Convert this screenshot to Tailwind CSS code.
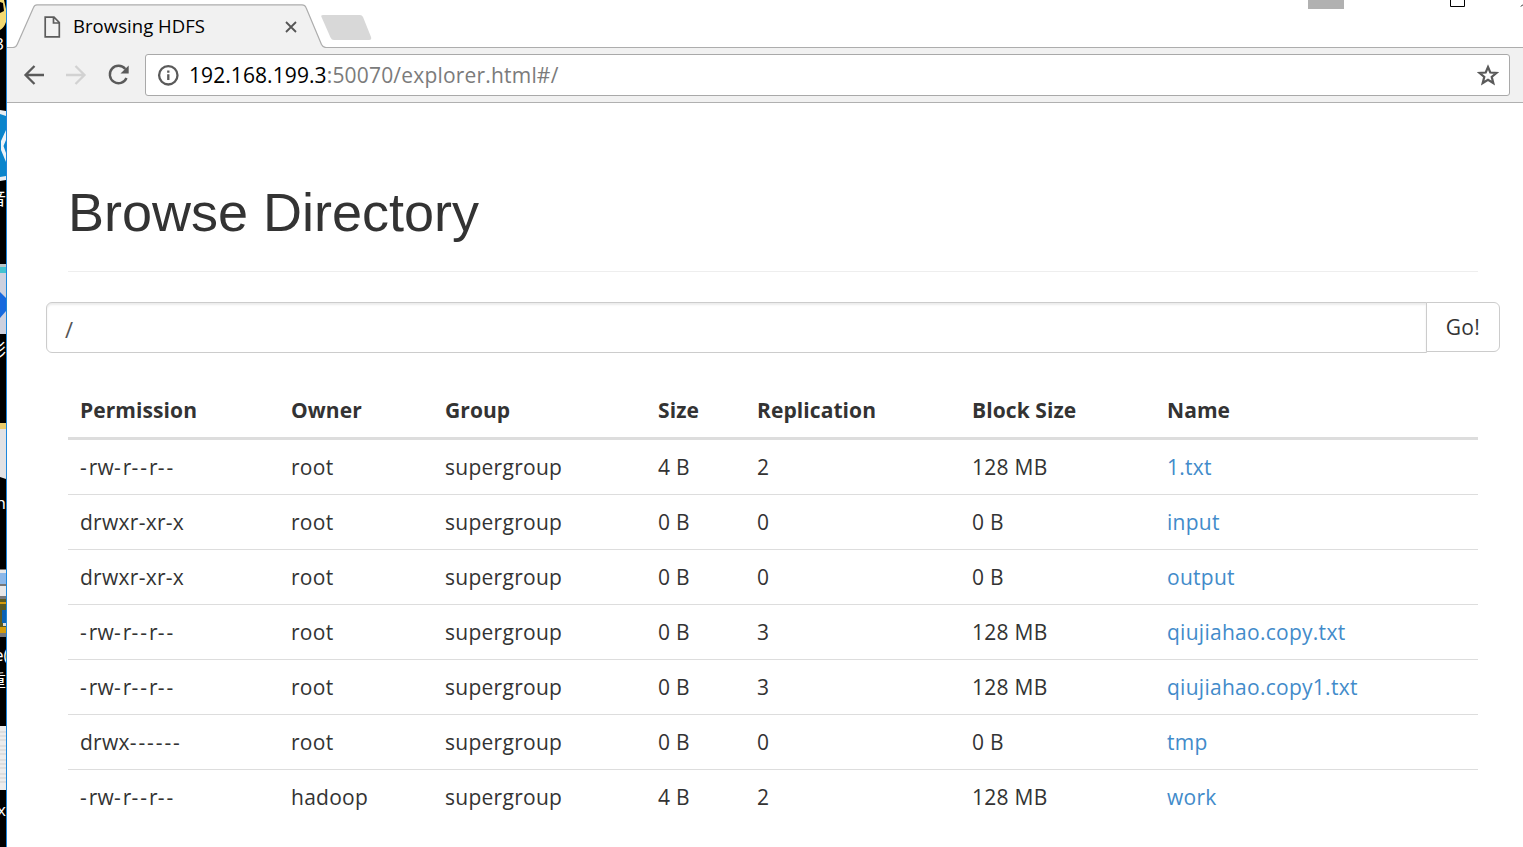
<!DOCTYPE html>
<html lang="en">
<head>
<meta charset="utf-8">
<title>Browsing HDFS</title>
<script src="https://cdn.jsdelivr.net/npm/@tailwindcss/browser@4"></script>
</head>
<body class="flex h-[847px] w-[1523px] overflow-hidden bg-white font-['Open_Sans','Noto_Sans_CJK_SC',sans-serif] text-[21px] text-[#333]">

<!-- Desktop sliver behind the window -->
<aside class="flex h-[847px] w-[7px] shrink-0 flex-col overflow-hidden border-r border-[#1c86dc] bg-black text-[19px] leading-6 text-white">
  <svg class="h-[34px] w-[6px] shrink-0" viewBox="0 0 6 34"><path d="M0 0H4L6 9V22Q4 28 0 30V13L4 11L3 3L0 2Z" fill="#f3da72"/></svg>
  <div class="flex h-[76px] w-[6px] shrink-0 justify-end overflow-hidden pr-[2px] text-[17px] leading-5">3</div>
  <svg class="h-[71px] w-[6px] shrink-0" viewBox="0 0 6 71"><path d="M0 0L6 1V70L0 71Z" fill="#e8edf2"/><path d="M0 4L6 6V66L0 67Z" fill="#0a84cb"/><path d="M6 20L1 31V40L6 52V43L3.500 36L6 30Z" fill="#eef3f8"/></svg>
  <div class="flex h-[83px] w-[6px] shrink-0 justify-end overflow-hidden pt-[6px] text-[17px]">音</div>
  <svg class="h-[70px] w-[6px] shrink-0" viewBox="0 0 6 70" preserveAspectRatio="none"><path d="M0 0H6V70H0Z" fill="#cdd1df"/><path d="M0 0H6V3H0Z" fill="#b9c5c8"/><path d="M0 3H6V9H0Z" fill="#45c3d0"/><path d="M0 28L6 34V47L0 54Z" fill="#1769dd"/></svg>
  <div class="flex h-[89px] w-[6px] shrink-0 justify-end overflow-hidden pt-[4px] text-[17px]">影</div>
  <svg class="h-[56px] w-[6px] shrink-0" viewBox="0 0 6 56"><path d="M0 0H6V56L0 54Z" fill="#e2e2e4"/><path d="M0 0H6V6H0Z" fill="#e9cb6b"/></svg>
  <div class="flex h-[90px] w-[6px] shrink-0 justify-end overflow-hidden pt-[12px] text-[17px]">h</div>
  <svg class="h-[68px] w-[6px] shrink-0" viewBox="0 0 6 68"><path d="M0 0H6V68H0Z" fill="#777"/><path d="M0 3H6V15H0Z" fill="#8bb7e8"/><path d="M0 1H6V4H0ZM0 17H6V27H0Z" fill="#e8e8e8"/><path d="M0 30H6V64H0Z" fill="#5b5a22"/><path d="M0 33H6V35H0ZM0 58H6V64H0Z" fill="#d49b0b"/><path d="M2 41H6V54H2Z" fill="#0b62b4"/><path d="M3 54H6V57H3Z" fill="#ddd"/></svg>
  <div class="flex h-[26px] w-[6px] shrink-0 justify-start overflow-hidden pt-[6px] text-[17px]"><span class="-ml-[6px]">e(</span></div>
  <div class="flex h-[63px] w-[6px] shrink-0 justify-end overflow-hidden pt-[6px] text-[17px]">重</div>
  <svg class="h-[64px] w-[6px] shrink-0" viewBox="0 0 6 64"><path d="M0 0H6V64H0Z" fill="#ececec"/><path d="M0 6H6M0 10H6M0 14H6M0 20H6M0 24H6M0 28H6M0 34H6M0 38H6M0 42H6M0 48H6M0 52H6M0 56H6" stroke="#cfcfcf"/></svg>
  <div class="flex h-[57px] w-[6px] shrink-0 justify-end overflow-hidden pt-[8px] text-[17px]">x</div>
</aside>

<main class="flex min-w-0 flex-1 flex-col">
  <!-- Tab strip -->
  <header class="relative h-[48px] shrink-0">
    <svg class="block h-[48px] w-[1516px]" viewBox="7 0 1516 48" fill="none">
      <path d="M7 47.500H13Q16 47.500 17.200 44.500L33.500 7.500Q34.500 4.800 37 4.800H302Q305 4.800 306 7.500L321.500 44.500Q323 47.500 326 47.500V48H7Z" fill="#f1f1f1"/>
      <path d="M7 47.500H13Q16 47.500 17.200 44.500L33.500 7.500Q34.500 4.800 37 4.800H302Q305 4.800 306 7.500L321.500 44.500Q323 47.500 326 47.500H1523" stroke="#adadad" stroke-width="1.200"/>
      <path d="M323 15H360Q362 15 363 17L371 37Q372 40 369 40H334Q331.500 40 330.500 37.500L321.500 17Q320.500 15 323 15Z" fill="#d8d8d8"/>
      <path d="M45.200 17.200H54L59.300 22.500V36.800H45.200ZM53.500 17.200V23H59.300" stroke="#5c5c5c" stroke-width="1.700"/>
      <path d="M286 22L296 32M296 22L286 32" stroke="#555" stroke-width="1.800"/>
      <path d="M1308 0H1344V9H1308Z" fill="#b1b1b1"/>
      <path d="M1450.500 0V6.500H1464.500V0" stroke="#000"/>
      <path d="M1521 6.500L1523 4.500" stroke="#000"/>
    </svg>
    <span class="absolute top-[13px] left-[66px] text-[18.500px] leading-[26px] tracking-[0.05px] whitespace-nowrap text-black">Browsing HDFS</span>
  </header>

  <!-- Toolbar -->
  <nav class="flex h-[55px] shrink-0 items-start border-b border-[#b0b0b0] bg-[#f1f1f1] pt-[6px]">
    <svg class="block h-[42px] w-[138px] shrink-0" viewBox="7 54 138 42" fill="none" stroke-width="2.300">
      <path d="M44 75H26M34.500 66L25.500 75L34.500 84" stroke="#5a5a5a"/>
      <path d="M66 75H84M75.500 66L84.500 75L75.500 84" stroke="#d2d2d2"/>
      <path d="M125.300 69A8.700 8.700 0 1 0 126.500 78" stroke="#5a5a5a" stroke-width="2.400"/>
      <path d="M128.700 65.500V73.500H120.500Z" fill="#5a5a5a"/>
    </svg>
    <div class="flex h-[42px] w-[1365px] items-center rounded-[3px] border border-[#a9a9a9] bg-white pr-[10px] pl-[11px]">
      <svg class="size-[22px] shrink-0" viewBox="0 0 22 22" fill="none" stroke="#5a5a5a" stroke-width="2.300"><circle cx="11.300" cy="11.300" r="9.200"/><path d="M11.300 10.200V16M11.300 6.500V8.800"/></svg>
      <span class="ml-[10px] text-[21px] leading-[30px] tracking-[0.19px] whitespace-nowrap text-[#7b7b7b]"><span class="tracking-[0.08px] text-black">192.168.199.3</span>:50070/explorer.html#/</span>
      <svg class="ml-auto size-[22px] shrink-0" viewBox="0 0 22 22" fill="none" stroke="#5a5a5a" stroke-width="2.200"><path d="M11 3L13.300 8.500L19.400 9L14.700 12.900L16.300 19L11 15.700L5.700 19L7.300 12.900L2.600 9L8.700 8.500Z"/></svg>
    </div>
  </nav>

  <!-- Page -->
  <section class="flex flex-1 flex-col pr-[23px] pl-[39px]">
    <h1 class="mr-[22px] ml-[22px] h-[169px] border-b border-[#eee] pt-[79px] font-['Liberation_Sans',sans-serif] text-[54px] leading-[60px]">Browse Directory</h1>
    <div class="mt-[30px] flex h-[51px] items-start">
      <div class="flex h-[51px] w-[1381px] items-center rounded-l-[6px] border border-[#ccc] pt-[3px] pl-[18px] text-[22px] text-[#555] shadow-[inset_0_2px_2px_rgba(0,0,0,0.075)]">/</div>
      <div class="-ml-px flex h-[50px] w-[74px] items-center justify-center rounded-r-[6px] border border-[#ccc] bg-white pt-[2px] tracking-[0.4px]">Go!</div>
    </div>
    <table class="mx-[22px] mt-[30px] w-[1410px] table-fixed border-separate border-spacing-0 text-left leading-[30px]">
      <colgroup><col class="w-[211px]"><col class="w-[154px]"><col class="w-[213px]"><col class="w-[99px]"><col class="w-[215px]"><col class="w-[195px]"><col class="w-[323px]"></colgroup>
      <thead><tr class="h-[57px] [&>th]:border-b-3 [&>th]:border-[#ddd] [&>th]:px-[12px] [&>th]:py-0 [&>th]:font-bold [&>th]:tracking-[0.08px]"><th>Permission</th><th>Owner</th><th>Group</th><th>Size</th><th>Replication</th><th>Block Size</th><th>Name</th></tr></thead>
      <tbody class="tracking-[0.27px] [&>tr]:h-[55px] [&_b]:font-normal [&_b]:tracking-[1.9px] [&_td]:border-b [&_td]:border-[#ddd] [&_td]:px-[12px] [&_td]:py-0 [&_td:last-child]:text-[#428bca] [&>tr:last-child>td]:border-transparent">
        <tr><td><b>-</b>rw<b>-</b>r<b>--</b>r<b>--</b></td><td>root</td><td>supergroup</td><td>4 B</td><td>2</td><td>128 MB</td><td>1.txt</td></tr>
        <tr><td>drwxr-xr-x</td><td>root</td><td>supergroup</td><td>0 B</td><td>0</td><td>0 B</td><td>input</td></tr>
        <tr><td>drwxr-xr-x</td><td>root</td><td>supergroup</td><td>0 B</td><td>0</td><td>0 B</td><td>output</td></tr>
        <tr><td><b>-</b>rw<b>-</b>r<b>--</b>r<b>--</b></td><td>root</td><td>supergroup</td><td>0 B</td><td>3</td><td>128 MB</td><td>qiujiahao.copy.txt</td></tr>
        <tr><td><b>-</b>rw<b>-</b>r<b>--</b>r<b>--</b></td><td>root</td><td>supergroup</td><td>0 B</td><td>3</td><td>128 MB</td><td>qiujiahao.copy1.txt</td></tr>
        <tr><td>drwx<b>------</b></td><td>root</td><td>supergroup</td><td>0 B</td><td>0</td><td>0 B</td><td>tmp</td></tr>
        <tr><td><b>-</b>rw<b>-</b>r<b>--</b>r<b>--</b></td><td>hadoop</td><td>supergroup</td><td>4 B</td><td>2</td><td>128 MB</td><td>work</td></tr>
      </tbody>
    </table>
  </section>
</main>
</body>
</html>
